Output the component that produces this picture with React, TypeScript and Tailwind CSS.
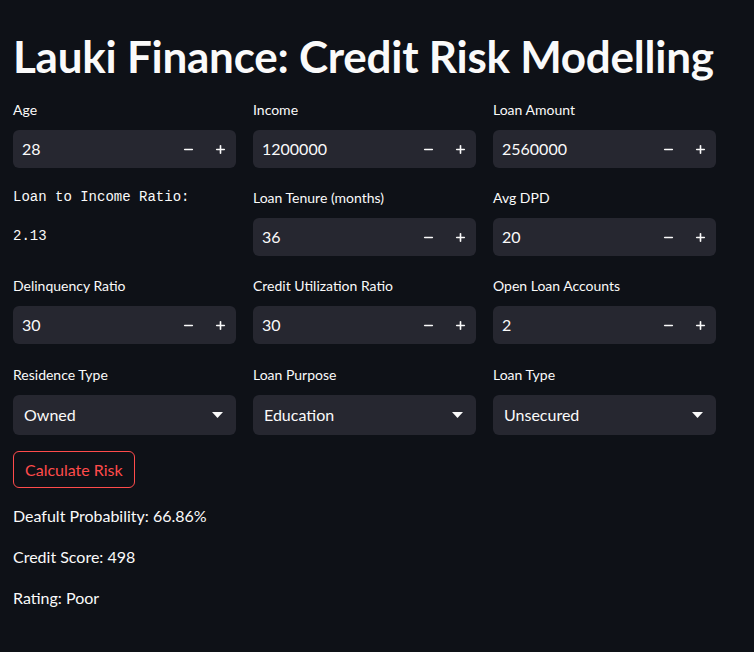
import { Minus, Plus } from 'lucide-react';

const FONT = "font-['Lato','Noto_Sans',sans-serif]";

function NumberInput({ label, value }: { label: string; value: string }) {
  return (
    <div className="flex flex-col">
      <div className="h-[21px] flex items-center text-[14px] text-[#fafafa] mb-[10px]">{label}</div>
      <div className="h-[38px] rounded-md bg-[#262730] flex items-center">
        <div className="flex-1 pl-[9px] text-[16px] text-[#fafafa]">{value}</div>
        <button className="w-[32px] h-full flex items-center justify-center text-[#fafafa]">
          <Minus className="w-[13px] h-[13px]" strokeWidth={3} />
        </button>
        <button className="w-[32px] h-full flex items-center justify-center text-[#fafafa]">
          <Plus className="w-[13px] h-[13px]" strokeWidth={3} />
        </button>
      </div>
    </div>
  );
}

function SelectBox({ label, value }: { label: string; value: string }) {
  return (
    <div className="flex flex-col pt-[1px]">
      <div className="h-[21px] flex items-center text-[14px] text-[#fafafa] mb-[10px]">{label}</div>
      <div className="h-[40px] rounded-md bg-[#262730] flex items-center justify-between pl-[11px] pr-[13px]">
        <span className="text-[16px] text-[#fafafa]">{value}</span>
        <svg width="11" height="6" viewBox="0 0 11 6">
          <path d="M0 0 L11 0 L5.5 6 Z" fill="#fafafa" />
        </svg>
      </div>
    </div>
  );
}

export default function App() {
  return (
    <div className={`min-h-[652px] bg-[#0e1117] text-[#fafafa] ${FONT}`}>
      <div className="w-[716px] pl-[13px] pt-[30px]">
        <h1 className="text-[44px] font-bold leading-[52px] tracking-[-0.25px] whitespace-nowrap mb-[17px]">
          Lauki Finance: Credit Risk Modelling
        </h1>

        <div className="grid grid-cols-3 gap-x-[17px] gap-y-[19px]">
          <NumberInput label="Age" value="28" />
          <NumberInput label="Income" value="1200000" />
          <NumberInput label="Loan Amount" value="2560000" />

          <div className="flex flex-col font-['Liberation_Mono',monospace] text-[14px]">
            <div className="h-[21px] flex items-center">Loan to Income Ratio:</div>
            <div className="h-[21px] flex items-center mt-[18px]">2.13</div>
          </div>
          <NumberInput label="Loan Tenure (months)" value="36" />
          <NumberInput label="Avg DPD" value="20" />

          <NumberInput label="Delinquency Ratio" value="30" />
          <NumberInput label="Credit Utilization Ratio" value="30" />
          <NumberInput label="Open Loan Accounts" value="2" />

          <SelectBox label="Residence Type" value="Owned" />
          <SelectBox label="Loan Purpose" value="Education" />
          <SelectBox label="Loan Type" value="Unsecured" />
        </div>

        <button className="mt-[16px] h-[37px] px-[11px] rounded-md border border-[#ff4b4b] text-[#ff4b4b] text-[16px]">
          Calculate Risk
        </button>

        <div className="mt-[16px] flex flex-col gap-[17px] text-[16px]">
          <p className="leading-[24px]">Deafult Probability: 66.86%</p>
          <p className="leading-[24px]">Credit Score: 498</p>
          <p className="leading-[24px]">Rating: Poor</p>
        </div>
      </div>
    </div>
  );
}
